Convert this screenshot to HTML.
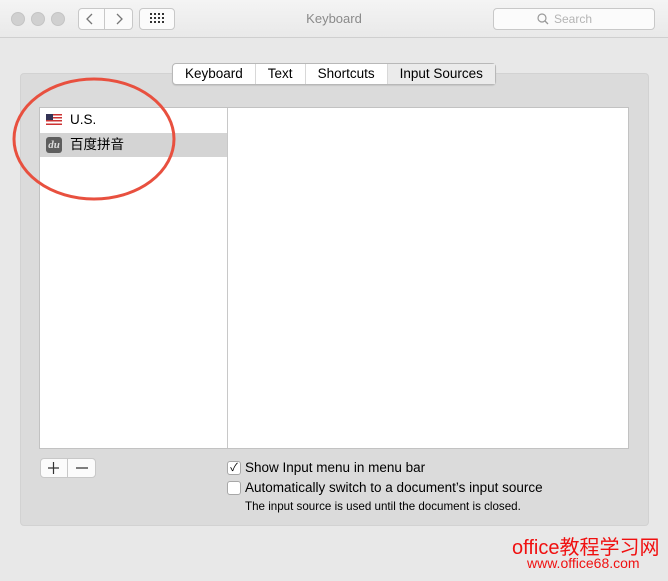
<!DOCTYPE html><html><head><style>
body{margin:0;width:668px;height:581px;overflow:hidden;background:#e8e8e8;font-family:"Liberation Sans","Noto Sans CJK SC",sans-serif;position:relative}
.a{position:absolute}
.tb{left:0;top:0;width:668px;height:37px;background:linear-gradient(#f4f4f4,#e9e9e9);border-bottom:1px solid #cfcfcf}
.dot{width:12px;height:12px;border-radius:50%;background:#d0d0d0;border:1px solid #c4c4c4;top:12px}
.btn{background:#fbfbfb;border:1px solid #c8c8c8;border-radius:4px}
.tabs{left:172px;top:63px;height:20px;border:1px solid #b8b8b8;border-radius:4px;background:#fff;display:flex;font-size:13.5px;box-shadow:0 1px 1px rgba(0,0,0,.1)}
.tabs div{padding:0 12px;line-height:20px;border-right:1px solid #d8d8d8}
.tabs div:last-child{border:none;background:#ebebeb}
.row{left:40px;width:187px;height:24px;font-size:13.5px;line-height:24px}
.cb{width:12px;height:12px;border:1px solid #a8a8a8;border-radius:3px;background:#fff;left:227px;font-size:11px;line-height:12px;text-align:center}
.t{font-size:13.5px;left:245px}
</style></head><body>
<div class="a tb"></div>
<div class="a dot" style="left:11px"></div><div class="a dot" style="left:31px"></div><div class="a dot" style="left:51px"></div>
<div class="a btn" style="left:78px;top:8px;width:53px;height:20px"></div>
<div class="a" style="left:104px;top:9px;width:1px;height:20px;background:#c8c8c8"></div>
<svg class="a" style="left:78px;top:8px" width="54" height="22"><path d="M14 6l-5 5 5 5M39 6l5 5-5 5" fill="none" stroke="#777" stroke-width="1.3"/></svg>
<div class="a btn" style="left:139px;top:8px;width:34px;height:20px"></div>
<svg class="a" style="left:150px;top:12px" width="14" height="14"><g fill="#333"><rect x="0" y="1" width="2" height="2"/><rect x="4" y="1" width="2" height="2"/><rect x="8" y="1" width="2" height="2"/><rect x="12" y="1" width="2" height="2"/><rect x="0" y="5" width="2" height="2"/><rect x="4" y="5" width="2" height="2"/><rect x="8" y="5" width="2" height="2"/><rect x="12" y="5" width="2" height="2"/><rect x="0" y="9" width="2" height="2"/><rect x="4" y="9" width="2" height="2"/><rect x="8" y="9" width="2" height="2"/><rect x="12" y="9" width="2" height="2"/></g></svg>
<div class="a" style="left:0;width:668px;top:11px;text-align:center;font-size:13px;color:#8a8a8a">Keyboard</div>
<div class="a btn" style="left:493px;top:8px;width:160px;height:20px;border-radius:4px"></div>
<svg class="a" style="left:537px;top:13px" width="12" height="12"><circle cx="5" cy="5" r="4" fill="none" stroke="#999" stroke-width="1.2"/><path d="M8 8l3 3" stroke="#999" stroke-width="1.3"/></svg>
<div class="a" style="left:554px;top:12px;font-size:12px;color:#b4b4b4">Search</div>
<div class="a" style="left:20px;top:73px;width:627px;height:451px;background:#dbdbdb;border:1px solid #d2d2d2;border-radius:4px"></div>
<div class="a tabs"><div>Keyboard</div><div>Text</div><div>Shortcuts</div><div>Input Sources</div></div>
<div class="a" style="left:39px;top:107px;width:588px;height:340px;background:#fff;border:1px solid #c2c2c2"></div>
<div class="a" style="left:227px;top:108px;width:1px;height:340px;background:#c8c8c8"></div>
<div class="a row" style="top:108px"><svg style="position:absolute;left:6px;top:6px" width="16" height="11"><rect width="16" height="11" fill="#fff"/><g fill="#c33"><rect y="0" width="16" height="1.5"/><rect y="3" width="16" height="1.5"/><rect y="6" width="16" height="1.5"/><rect y="9.5" width="16" height="1.5"/></g><rect width="7" height="6" fill="#335"/></svg><span style="position:absolute;left:30px">U.S.</span></div>
<div class="a row" style="top:133px;background:#d4d4d4"><div style="position:absolute;left:6px;top:4px;width:16px;height:16px;border-radius:3px;background:#5e5e5e;color:#ddd;font:italic bold 11px 'Liberation Serif',serif;line-height:16px;text-align:center">du</div><span style="position:absolute;left:30px">百度拼音</span></div>
<svg class="a" style="left:0;top:70px" width="200" height="140"><ellipse cx="94" cy="69" rx="80" ry="60" fill="none" stroke="#e8503f" stroke-width="3"/></svg>
<div class="a btn" style="left:40px;top:458px;width:54px;height:18px"></div>
<div class="a" style="left:67px;top:459px;width:1px;height:18px;background:#c8c8c8"></div>
<svg class="a" style="left:40px;top:458px" width="56" height="20"><path d="M13.5 4v12M8 10h11M36 10h12" stroke="#333" stroke-width="1.2"/></svg>
<div class="a cb" style="top:461px">✓</div><div class="a t" style="top:460px">Show Input menu in menu bar</div>
<div class="a cb" style="top:481px"></div><div class="a t" style="top:480px">Automatically switch to a document’s input source</div>
<div class="a" style="left:245px;top:500px;font-size:11.6px">The input source is used until the document is closed.</div>
<div class="a" style="left:512px;top:531px;font-size:20px;color:#f01010">office教程学习网</div>
<div class="a" style="left:527px;top:555px;font-size:14px;color:#f01010">www.office68.com</div>
</body></html>
